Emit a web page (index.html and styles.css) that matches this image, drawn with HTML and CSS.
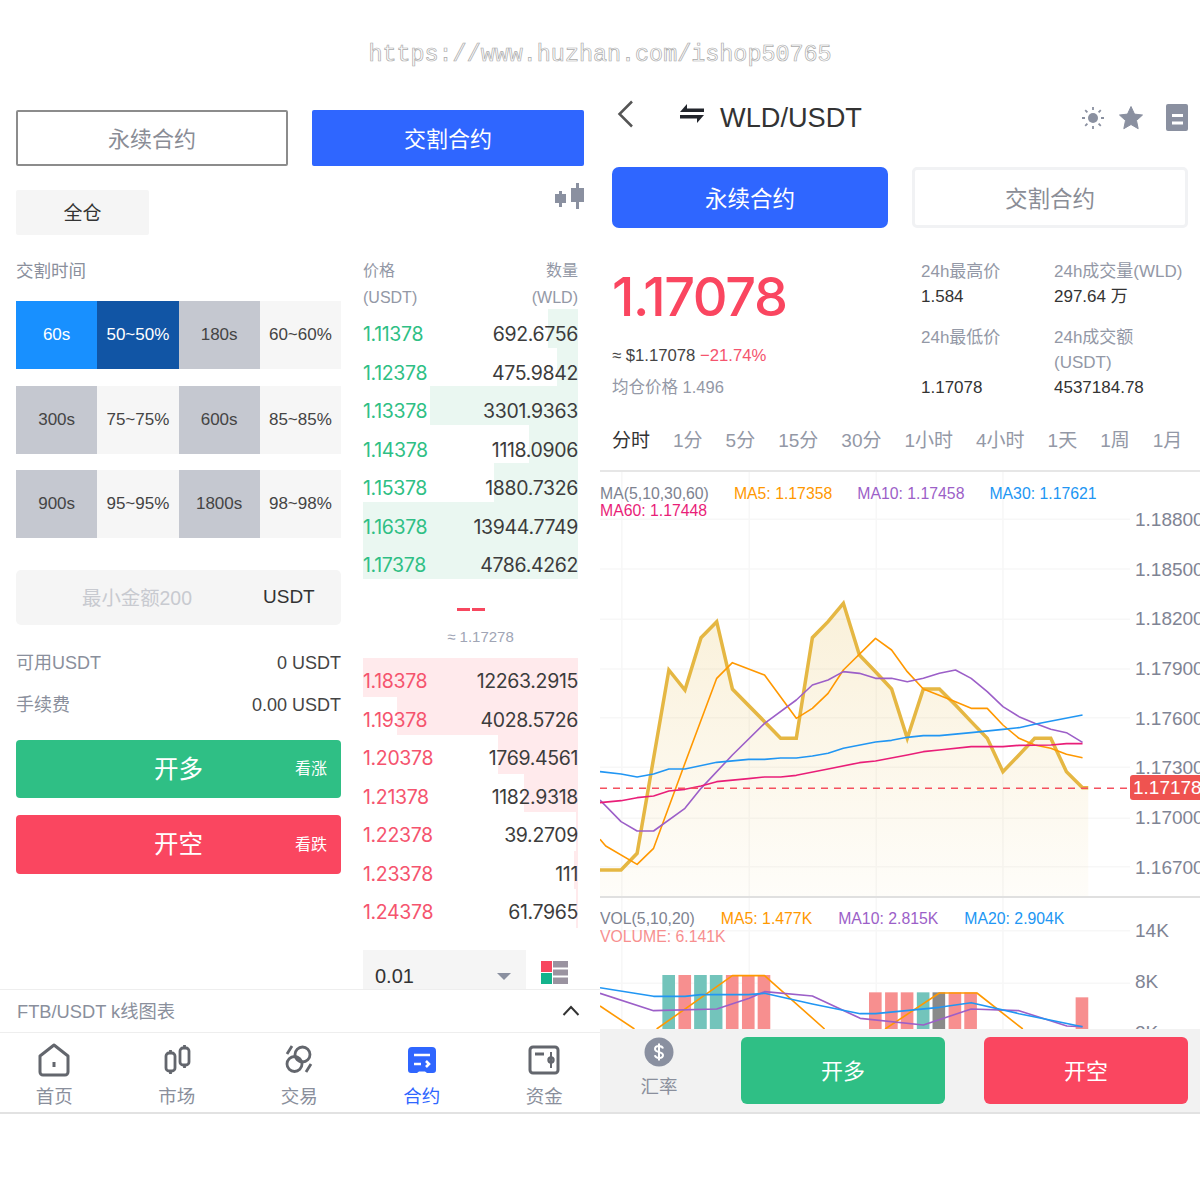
FILE: index.html
```html
<!DOCTYPE html>
<html lang="en">
<head>
    <meta charset="UTF-8">
    <meta name="viewport" content="width=device-width, initial-scale=1.0">
    <title>WLD/USDT</title>
    <link rel="stylesheet" href="styles.css">
</head>
<body>
    <div class="watermark">https://www.huzhan.com/ishop50765</div>

    <div class="screens">
        <!-- delivery contract screen -->
        <section class="screen">
            <div class="main">
                <div class="tabs">
                    <div class="tab tab-outline">永续合约</div>
                    <div class="tab tab-active">交割合约</div>
                </div>

                <div class="mode-row">
                    <div class="chip">全仓</div>
                    <svg class="candle-icon" width="30" height="27" viewBox="0 0 30 27">
                        <path d="M4 8h3v3h4v9H7v4H4v-4H0v-9h4z" fill="#8a90a0"/>
                        <path d="M21 0h3v5h5v14h-5v7h-3v-7h-5V5h5z" fill="#8a90a0"/>
                    </svg>
                </div>

                <div class="trade">
                    <div class="form">
                        <div class="form-label">交割时间</div>
                        <div class="periods">
                            <div class="cell cell-blue">60s</div>
                            <div class="cell cell-navy">50~50%</div>
                            <div class="cell cell-grey">180s</div>
                            <div class="cell">60~60%</div>
                            <div class="cell cell-grey">300s</div>
                            <div class="cell">75~75%</div>
                            <div class="cell cell-grey">600s</div>
                            <div class="cell">85~85%</div>
                            <div class="cell cell-grey">900s</div>
                            <div class="cell">95~95%</div>
                            <div class="cell cell-grey">1800s</div>
                            <div class="cell">98~98%</div>
                        </div>
                        <div class="amount">
                            <span class="amount-hint">最小金额200</span>
                            <span class="amount-unit">USDT</span>
                        </div>
                        <div class="info-row info-first"><span>可用USDT</span><b>0 USDT</b></div>
                        <div class="info-row"><span>手续费</span><b>0.00 USDT</b></div>
                        <div class="big-btn btn-green"><span class="big-text">开多</span><span class="big-note">看涨</span></div>
                        <div class="big-btn btn-red"><span class="big-text">开空</span><span class="big-note">看跌</span></div>
                    </div>

                    <div class="book">
                        <div class="book-head">
                            <div><span>价格</span><span>数量</span></div>
                            <div><span>(USDT)</span><span>(WLD)</span></div>
                        </div>
                        <div class="book-row buy"><i class="depth" style="width:14%"></i><span class="price">1.11378</span><span>692.6756</span></div>
                        <div class="book-row buy"><i class="depth" style="width:10%"></i><span class="price">1.12378</span><span>475.9842</span></div>
                        <div class="book-row buy"><i class="depth" style="width:69%"></i><span class="price">1.13378</span><span>3301.9363</span></div>
                        <div class="book-row buy"><i class="depth" style="width:23%"></i><span class="price">1.14378</span><span>1118.0906</span></div>
                        <div class="book-row buy"><i class="depth" style="width:39%"></i><span class="price">1.15378</span><span>1880.7326</span></div>
                        <div class="book-row buy"><i class="depth" style="width:100%"></i><span class="price">1.16378</span><span>13944.7749</span></div>
                        <div class="book-row buy"><i class="depth" style="width:100%"></i><span class="price">1.17378</span><span>4786.4262</span></div>
                        <div class="book-mid">
                            <div class="dashes"><i></i><i></i></div>
                            <div class="mid-price">≈ 1.17278</div>
                        </div>
                        <div class="book-row sell"><i class="depth" style="width:100%"></i><span class="price">1.18378</span><span>12263.2915</span></div>
                        <div class="book-row sell"><i class="depth" style="width:84%"></i><span class="price">1.19378</span><span>4028.5726</span></div>
                        <div class="book-row sell"><i class="depth" style="width:37%"></i><span class="price">1.20378</span><span>1769.4561</span></div>
                        <div class="book-row sell"><i class="depth" style="width:25%"></i><span class="price">1.21378</span><span>1182.9318</span></div>
                        <div class="book-row sell"><i class="depth" style="width:1%"></i><span class="price">1.22378</span><span>39.2709</span></div>
                        <div class="book-row sell"><i class="depth" style="width:2%"></i><span class="price">1.23378</span><span>111</span></div>
                        <div class="book-row sell"><i class="depth" style="width:1%"></i><span class="price">1.24378</span><span>61.7965</span></div>
                        <div class="book-tools">
                            <div class="select"><span>0.01</span><i class="caret"></i></div>
                            <svg width="27" height="23" viewBox="0 0 27 23">
                                <rect width="11" height="11" fill="#f7475f"/>
                                <rect y="12" width="11" height="11" fill="#14b38c"/>
                                <rect x="12" width="15" height="6.5" fill="#9a93a0"/>
                                <rect x="12" y="8.5" width="15" height="6" fill="#9a93a0"/>
                                <rect x="12" y="16.5" width="15" height="6.5" fill="#9a93a0"/>
                            </svg>
                        </div>
                    </div>
                </div>
            </div>

            <div class="kline-bar">
                <span>FTB/USDT k线图表</span>
                <svg width="18" height="11" viewBox="0 0 18 11"><path d="M1.5 10L9 2l7.5 8" fill="none" stroke="#333" stroke-width="2"/></svg>
            </div>
            <nav class="nav">
                <div class="nav-item">
                    <svg width="34" height="34" viewBox="0 0 34 34" fill="none" stroke="#63666d" stroke-width="3" stroke-linejoin="round">
                        <path d="M3 13L17 2l14 11v16a3 3 0 0 1-3 3H6a3 3 0 0 1-3-3z"/>
                        <path d="M17 19v5"/>
                    </svg>
                    <span>首页</span>
                </div>
                <div class="nav-item">
                    <svg width="34" height="34" viewBox="0 0 34 34" fill="none" stroke="#63666d" stroke-width="2.8">
                        <rect x="6" y="10" width="9" height="18" rx="3"/>
                        <path d="M10.500 7v3M10.500 28v3"/>
                        <rect x="20" y="5" width="9" height="17" rx="3"/>
                        <path d="M24.500 2v3M24.500 22v3"/>
                    </svg>
                    <span>市场</span>
                </div>
                <div class="nav-item">
                    <svg width="34" height="34" viewBox="0 0 34 34" fill="none" stroke="#63666d" stroke-width="2.8">
                        <circle cx="20.500" cy="11.500" r="7.500"/>
                        <circle cx="12.500" cy="21" r="7.500"/>
                        <path d="M5 11L10 3M29 21l-5 8"/>
                    </svg>
                    <span>交易</span>
                </div>
                <div class="nav-item nav-active">
                    <svg width="34" height="34" viewBox="0 0 34 34">
                        <path d="M7 4h20a4 4 0 0 1 4 4v19a3 3 0 0 1-3 3h-6l-2-1.500h-6L12 30H6a3 3 0 0 1-3-3V8a4 4 0 0 1 4-4z" fill="#2f66ff"/>
                        <path d="M9 12h16M9 21h7M21 18l3 3-3 3" fill="none" stroke="#fff" stroke-width="2.600"/>
                    </svg>
                    <span>合约</span>
                </div>
                <div class="nav-item">
                    <svg width="34" height="34" viewBox="0 0 34 34" fill="none" stroke="#63666d" stroke-width="3">
                        <rect x="3" y="4" width="28" height="26" rx="3"/>
                        <path d="M8 11h9" />
                        <path d="M24 9v16" stroke-width="2"/>
                        <circle cx="24" cy="17" r="2.500" stroke-width="2.400"/>
                    </svg>
                    <span>资金</span>
                </div>
            </nav>
        </section>

        <!-- perpetual contract screen -->
        <section class="screen">
            <header class="pair-head">
                <svg class="back-icon" width="17" height="28" viewBox="0 0 17 28"><path d="M15 1.500L2.500 14 15 26.500" fill="none" stroke="#555" stroke-width="2.500"/></svg>
                <svg class="swap-icon" width="24" height="19" viewBox="0 0 24 19"><path d="M7 0v4.500h17V8H0z" fill="#22252c"/><path d="M17 19v-4.500H0V11h24z" fill="#22252c"/></svg>
                <h1 class="pair">WLD/USDT</h1>
                <div class="head-icons">
                    <svg class="sun-icon" width="22" height="22" viewBox="0 0 22 22">
                        <circle cx="11" cy="11" r="5" fill="#8a90a0"/>
                        <path d="M11 0v3M11 19v3M0 11h3M19 11h3M3.200 3.200l2.200 2.200M16.600 16.600l2.200 2.200M3.200 18.800l2.200-2.200M16.600 5.400l2.200-2.200" stroke="#8a90a0" stroke-width="1.800"/>
                    </svg>
                    <svg class="star-icon" width="24" height="24" viewBox="0 0 24 24"><path d="M12 .5l3.500 7.600 8 .9-6 5.500 1.700 8.200L12 18.500l-7.200 4.200 1.700-8.200-6-5.500 8-.9z" fill="#8a90a0" stroke="#8a90a0" stroke-linejoin="round"/></svg>
                    <svg width="22" height="27" viewBox="0 0 22 27"><rect width="22" height="27" rx="2" fill="#8a90a0"/><path d="M6 11.500h11M6 19h11" stroke="#fff" stroke-width="3.200"/></svg>
                </div>
            </header>

            <div class="tabs tabs-big">
                <div class="tab tab-active">永续合约</div>
                <div class="tab tab-soft">交割合约</div>
            </div>

            <div class="quote">
                <div class="quote-left">
                    <div class="last-price">1.17078</div>
                    <div class="approx">≈ $1.17078 <em>−21.74%</em></div>
                    <div class="avg">均仓价格 1.496</div>
                </div>
                <div class="stat-col stat-low">
                    <div><label>24h最高价</label><b>1.584</b></div>
                    <div><label>24h最低价</label><b>1.17078</b></div>
                </div>
                <div class="stat-col">
                    <div><label>24h成交量(WLD)</label><b>297.64 万</b></div>
                    <div><label>24h成交额<br>(USDT)</label><b>4537184.78</b></div>
                </div>
            </div>

            <div class="periods-bar">
                <span class="on">分时</span><span>1分</span><span>5分</span><span>15分</span><span>30分</span><span>1小时</span><span>4小时</span><span>1天</span><span>1周</span><span>1月</span>
            </div>

            <div class="kchart">
                <svg class="plot plot-main" viewBox="0 0 1568 1320" preserveAspectRatio="none">
                    <defs>
                        <linearGradient id="goldFill" x1="0" y1="0" x2="0" y2="1">
                            <stop offset="0" stop-color="#e5b743" stop-opacity="0.2"/>
                            <stop offset="1" stop-color="#e5b743" stop-opacity="0.03"/>
                        </linearGradient>
                    </defs>
                    <path class="grid" d="M0 148H1385M0 297H1385M0 448H1385M0 597H1385M0 743H1385M0 892H1385M0 1045H1385M0 1190H1385M57 6V1285M390 6V1285M722 6V1285M1053 6V1285"/>
                    <polygon fill="url(#goldFill)" points="0,1200 55,1200 97,1150 180,600 222,660 264,503 305,455 346,657 430,755 472,805 513,805 555,503 596,455 636,400 678,555 720,605 762,657 803,805 845,657 887,657 929,705 970,755 1012,805 1053,905 1095,855 1136,805 1178,805 1219,905 1261,953 1276,953 1276,1285 0,1285"/>
                    <polyline class="line gold" points="0,1200 55,1200 97,1150 180,600 222,660 264,503 305,455 346,657 430,755 472,805 513,805 555,503 596,455 636,400 678,555 720,605 762,657 803,805 845,657 887,657 929,705 970,755 1012,805 1053,905 1095,855 1136,805 1178,805 1219,905 1261,953 1276,953"/>
                    <polyline class="line orange" points="0,1108 15,1128 97,1183 140,1135 222,880 305,625 346,578 430,615 513,745 555,715 596,670 636,600 720,505 762,540 803,605 845,657 929,695 970,715 1012,715 1053,765 1095,805 1136,825 1178,835 1219,853 1261,863"/>
                    <polyline class="line purple" points="0,990 55,1055 97,1083 140,1083 222,1015 264,955 346,855 430,760 513,690 555,645 596,630 636,605 678,610 720,625 762,625 803,635 845,625 887,610 929,600 970,625 1012,665 1053,710 1095,740 1136,760 1178,778 1219,788 1261,817"/>
                    <polyline class="line blue" points="0,905 55,912 97,921 140,912 180,897 222,897 305,877 388,868 430,868 472,864 513,864 555,858 596,850 636,835 720,816 762,811 803,802 845,797 887,797 970,788 1053,778 1095,773 1136,763 1261,735"/>
                    <polyline class="line pink" points="0,998 55,992 97,983 140,978 180,963 222,958 264,948 305,935 388,926 430,921 472,921 513,916 596,897 678,878 720,873 803,855 845,845 887,840 970,830 1053,830 1095,826 1178,825 1219,821 1261,821"/>
                    <path class="last-line" d="M0 955H1385"/>
                </svg>
                <div class="legend">
                    <span class="grey">MA(5,10,30,60)</span>
                    <span class="c-orange">MA5: 1.17358</span>
                    <span class="c-purple">MA10: 1.17458</span>
                    <span class="c-blue">MA30: 1.17621</span>
                    <span class="c-pink">MA60: 1.17448</span>
                </div>
                <div class="axis">
                    <span>1.18800</span><span>1.18500</span><span>1.18200</span><span>1.17900</span><span>1.17600</span><span>1.17300</span><span>1.17000</span><span>1.16700</span>
                </div>
                <div class="last-tag">1.17178</div>
            </div>

            <div class="vchart">
                <svg class="plot plot-vol" viewBox="0 0 1568 720" preserveAspectRatio="none">
                    <path class="grid" d="M0 122H1385M0 280H1385M57 0V420M390 0V420M722 0V420M1053 0V420"/>
                    <g class="bar-teal"><rect x="163" y="255" width="33" height="165"/><rect x="246" y="255" width="33" height="165"/><rect x="287" y="255" width="33" height="165"/><rect x="828" y="307" width="33" height="113"/></g>
                    <g class="bar-red">
                        <rect x="205" y="255" width="33" height="165"/><rect x="329" y="255" width="33" height="165"/><rect x="371" y="255" width="33" height="165"/><rect x="412" y="255" width="33" height="165"/>
                        <rect x="703" y="307" width="33" height="113"/><rect x="745" y="307" width="33" height="113"/><rect x="786" y="307" width="33" height="113"/><rect x="911" y="307" width="33" height="113"/><rect x="952" y="307" width="33" height="113"/><rect x="1243" y="322" width="33" height="98"/>
                    </g>
                    <rect x="869" y="307" width="33" height="113" fill="#8a8a8a"/>
                    <polyline class="line orange" points="0,348 90,417"/>
                    <polyline class="line orange" points="148,417 346,257 430,257 587,417"/>
                    <polyline class="line orange" points="745,417 887,309 985,309 1105,417"/>
                    <polyline class="line purple" points="0,310 140,362 305,357 390,325 430,305 555,318 680,385 845,405 970,357 1095,362 1220,408 1261,410"/>
                    <polyline class="line blue" points="0,293 140,319 222,319 264,314 388,314 430,310 555,342 680,371 720,371 887,352 970,338 1095,371 1261,410"/>
                </svg>
                <div class="legend legend-vol">
                    <span class="grey">VOL(5,10,20)</span>
                    <span class="c-orange">MA5: 1.477K</span>
                    <span class="c-purple">MA10: 2.815K</span>
                    <span class="c-blue">MA20: 2.904K</span>
                    <span class="c-salmon">VOLUME: 6.141K</span>
                </div>
                <div class="axis axis-vol"><span>14K</span><span>8K</span><span>2K</span></div>
            </div>

            <footer class="actions">
                <div class="rate">
                    <svg width="30" height="30" viewBox="0 0 30 30">
                        <circle cx="15" cy="15" r="14.500" fill="#8a90a0"/>
                        <path d="M19 11.500c-.6-1.800-2-2.500-4-2.500-2.300 0-4 1.100-4 3 0 4 8 2.200 8 6 0 1.900-1.700 3-4 3-2.200 0-3.600-.9-4.200-2.700M15 6.500v17" fill="none" stroke="#fff" stroke-width="2"/>
                    </svg>
                    <span>汇率</span>
                </div>
                <div class="act-btn btn-green">开多</div>
                <div class="act-btn btn-red">开空</div>
            </footer>
        </section>
    </div>
</body>
</html>
```

FILE: styles.css
```css
* {
    box-sizing: border-box;
}
html, body {
    margin: 0;
    padding: 0;
}
body {
    width: 1200px;
    height: 1200px;
    overflow: hidden;
    background: white;
    color: #333;
    font-family: "Liberation Sans", "Noto Sans CJK SC", sans-serif;
}
.watermark {
    height: 95px;
    padding-top: 40px;
    text-align: center;
    font-family: "Liberation Mono", monospace;
    font-size: 23.4px;
    line-height: 30px;
    color: white;
    -webkit-text-stroke: 0.7px #aaa;
}
.screens {
    display: flex;
}
.screen {
    position: relative;
    width: 600px;
    height: 1019px;
    display: flex;
    flex-direction: column;
    overflow: hidden;
    border-bottom: 2px solid #e2e2e2;
}

/* tabs */
.tabs {
    display: flex;
    gap: 24px;
    margin: 15px 16px 0;
}
.tab {
    width: 272px;
    height: 56px;
    padding-bottom: 2px;
    display: flex;
    align-items: center;
    justify-content: center;
    border-radius: 2px;
    font-size: 22px;
}
.tab-active {
    background: #2f66ff;
    color: white;
}
.tab-outline {
    border: 2px solid #8c8c8c;
    color: #8a8d96;
}
.tab-soft {
    border: 3px solid #f1f2f4;
    border-radius: 5px;
    color: #8a8d96;
}
.tabs-big {
    margin: 0 12px;
}
.tabs-big .tab {
    width: 276px;
    height: 61px;
    font-size: 22.5px;
}
.tabs-big .tab-active {
    border-radius: 7px;
}

/* left screen */
.main {
    height: 894px;
    overflow: hidden;
}
.mode-row {
    display: flex;
    justify-content: space-between;
    align-items: flex-start;
    margin: 24px 15px 0 16px;
}
.chip {
    width: 133px;
    height: 45px;
    padding-bottom: 2px;
    background: #f5f5f5;
    border-radius: 2px;
    display: flex;
    align-items: center;
    justify-content: center;
    font-size: 19px;
}
.candle-icon {
    margin-top: -7px;
}
.trade {
    display: flex;
    gap: 22px;
    margin-top: 23px;
    padding-left: 16px;
}
.form {
    width: 325px;
}
.form-label {
    height: 26px;
    margin-bottom: 17px;
    font-size: 17.5px;
    line-height: 26px;
    color: #8a8f9c;
}
.periods {
    display: grid;
    grid-template-columns: repeat(4, 1fr);
    grid-auto-rows: 68px;
    row-gap: 16.5px;
}
.cell {
    display: flex;
    align-items: center;
    justify-content: center;
    background: #f6f6f6;
    font-size: 17px;
    color: #444;
}
.cell-blue {
    background: #1890ff;
    color: white;
}
.cell-navy {
    background: #1155a5;
    color: white;
}
.cell-grey {
    background: #c5c8d0;
}
.amount {
    display: flex;
    align-items: center;
    height: 55px;
    margin-top: 32px;
    padding-left: 66px;
    padding-bottom: 2px;
    background: #f5f5f5;
    border-radius: 5px;
}
.amount-hint {
    width: 181px;
    font-size: 19.4px;
    color: #c8cad0;
}
.amount-unit {
    font-size: 19px;
    color: #333;
}
.info-row {
    display: flex;
    justify-content: space-between;
    height: 41.5px;
    font-size: 18px;
    line-height: 41px;
    color: #8a8f9c;
}
.info-row b {
    font-weight: normal;
    color: #444;
}
.info-first {
    margin-top: 18px;
}
.big-btn {
    position: relative;
    height: 58px;
    margin-top: 14px;
    padding-bottom: 4px;
    border-radius: 4px;
    color: white;
    display: flex;
    align-items: center;
    justify-content: center;
}
.btn-red.big-btn {
    margin-top: 17px;
    height: 59px;
}
.btn-green {
    background: #2fbf85;
}
.btn-red {
    background: #fa4660;
}
.big-text {
    font-size: 24.5px;
}
.big-note {
    position: absolute;
    right: 14px;
    font-size: 16px;
}

/* order book */
.book {
    width: 215px;
    margin-top: -1px;
}
.book-head {
    height: 52px;
    font-size: 16px;
    line-height: 27px;
    color: #9398a6;
}
.book-head div {
    display: flex;
    justify-content: space-between;
}
.book-row {
    position: relative;
    display: flex;
    justify-content: space-between;
    height: 38.5px;
    padding-top: 12px;
    font-family: Inter, "Liberation Sans", sans-serif;
    font-size: 19.5px;
    letter-spacing: -0.35px;
    line-height: 26px;
    color: #3c3c3c;
}
.book-row span {
    position: relative;
}
.depth {
    position: absolute;
    top: 0;
    right: 0;
    bottom: 0;
}
.buy .depth {
    background: #eaf7f1;
}
.buy .price {
    color: #2fbf85;
}
.sell {
    padding-top: 10px;
}
.sell .depth {
    background: #ffeaec;
}
.sell .price {
    color: #f5546e;
}
.book-mid {
    height: 79.5px;
    padding-top: 29px;
    text-align: center;
}
.dashes {
    display: flex;
    justify-content: center;
    gap: 2px;
    height: 3px;
}
.dashes i {
    width: 13px;
    background: #f7475f;
}
.mid-price {
    margin-top: 16px;
    padding-left: 20px;
    font-size: 15px;
    line-height: 20px;
    color: #a0a5b5;
}
.book-tools {
    display: flex;
    align-items: flex-start;
    gap: 15px;
    margin-top: 22px;
}
.book-tools svg {
    margin-top: 11px;
}
.select {
    display: flex;
    align-items: center;
    justify-content: space-between;
    width: 163px;
    height: 54px;
    padding: 0 15px 0 12px;
    background: #f5f5f5;
    font-size: 20px;
}
.caret {
    width: 0;
    height: 0;
    border-left: 7px solid transparent;
    border-right: 7px solid transparent;
    border-top: 7px solid #8a90a0;
}
.kline-bar {
    display: flex;
    align-items: center;
    justify-content: space-between;
    height: 44px;
    padding: 0 20px 2px 17px;
    border-top: 1px solid #eee;
    border-bottom: 1px solid #eee;
    font-size: 18.3px;
    color: #8a8f9c;
}
.nav {
    display: grid;
    grid-template-columns: repeat(5, 122.5px);
    margin-left: -7px;
}
.nav-item {
    display: flex;
    flex-direction: column;
    align-items: center;
    padding-top: 10px;
    font-size: 18.5px;
    line-height: 26px;
    color: #8a8f9c;
}
.nav-item span {
    margin-top: 7px;
}
.nav-active {
    color: #2f66ff;
}

/* right screen */
.pair-head {
    display: flex;
    align-items: flex-start;
    flex: none;
    height: 72px;
    padding-left: 17px;
    padding-right: 12px;
}
.back-icon {
    margin-top: 5px;
}
.swap-icon {
    margin-left: 46px;
    margin-top: 9px;
}
.pair {
    margin: 7px 0 0 16px;
    font-size: 27.2px;
    font-weight: normal;
    line-height: 32px;
    color: #333;
}
.head-icons {
    display: flex;
    align-items: flex-start;
    margin-left: auto;
    margin-top: 9px;
}
.sun-icon {
    margin-top: 3px;
    margin-right: 15px;
}
.star-icon {
    margin-top: 2px;
    margin-right: 23px;
}
.quote {
    display: flex;
    flex: none;
    height: 171px;
    margin-top: 31px;
    padding-left: 12px;
    line-height: 25px;
}
.quote-left {
    width: 309px;
}
.last-price {
    height: 76px;
    font-family: Inter, "Liberation Sans", sans-serif;
    font-size: 54px;
    font-weight: 500;
    line-height: 76px;
    letter-spacing: -1.4px;
    color: #fa4660;
}
.approx {
    margin-top: 7.5px;
    font-size: 16.7px;
    color: #444;
}
.approx em {
    font-style: normal;
    color: #f5546e;
}
.avg {
    margin-top: 7px;
    font-size: 16.5px;
    color: #9398a6;
}
.stat-col {
    width: 133px;
    display: flex;
    flex-direction: column;
    gap: 16px;
    height: 142px;
    font-size: 17px;
}
.stat-col label {
    display: block;
    color: #9398a6;
}
.stat-col b {
    display: block;
    font-weight: normal;
    font-size: 17px;
    color: #333;
}
.stat-low div:last-child label {
    margin-bottom: 25px;
}
.periods-bar {
    display: flex;
    flex: none;
    gap: 23px;
    height: 72px;
    margin-top: -30px;
    padding: 28px 0 16px 12px;
    border-bottom: 2px solid #e6e6e6;
    font-size: 19px;
    line-height: 26px;
    color: #9398a6;
    white-space: nowrap;
}
.periods-bar .on {
    color: #333;
}

/* charts */
.kchart, .vchart {
    position: relative;
    flex: none;
    overflow: hidden;
}
.kchart {
    height: 426px;
    border-bottom: 2px solid #e0e0e0;
}
.vchart {
    height: 131px;
}
.plot {
    position: absolute;
    left: 0;
    width: 600px;
}
.plot-main {
    top: -2px;
    height: 440px;
}
.plot-vol {
    top: -8px;
    height: 240px;
}
.plot * {
    vector-effect: non-scaling-stroke;
}
.grid {
    fill: none;
    stroke: #f7f7f7;
    stroke-width: 1.5;
}
.line {
    fill: none;
    stroke-width: 1.6;
    stroke-linejoin: round;
}
.gold {
    stroke: #e5b743;
    stroke-width: 3.5;
    stroke-linejoin: miter;
}
.orange {
    stroke: #ff9800;
}
.purple {
    stroke: #9c5fc8;
}
.blue {
    stroke: #2196f3;
}
.pink {
    stroke: #e91e78;
}
.last-line {
    fill: none;
    stroke: #f4505f;
    stroke-width: 1.5;
    stroke-dasharray: 7 6;
}
.bar-teal {
    fill: #73c4bb;
}
.bar-red {
    fill: #f78f8f;
}
.legend {
    position: relative;
    display: flex;
    flex-wrap: wrap;
    gap: 0 25px;
    width: 510px;
    padding-top: 13px;
    font-size: 15.8px;
    line-height: 17px;
}
.legend-vol {
    gap: 0 26px;
    padding-top: 12px;
    line-height: 18px;
}
.grey {
    color: #7d8290;
}
.c-orange {
    color: #ff9800;
}
.c-purple {
    color: #9c5fc8;
}
.c-blue {
    color: #2196f3;
}
.c-pink {
    color: #e91e78;
}
.c-salmon {
    color: #f78f8f;
}
.axis {
    position: absolute;
    top: 34px;
    left: 535px;
    display: flex;
    flex-direction: column;
    gap: 21.7px;
    font-size: 19px;
    line-height: 28px;
    color: #7f8494;
}
.axis-vol {
    top: 20px;
    gap: 25px;
    line-height: 26px;
}
.last-tag {
    position: absolute;
    top: 303px;
    left: 530px;
    width: 74px;
    height: 25px;
    padding-left: 3px;
    background: #ef5350;
    border-radius: 3px;
    color: white;
    font-size: 19px;
    line-height: 25px;
}
.actions {
    display: flex;
    flex: none;
    align-items: flex-start;
    height: 83px;
    padding-top: 8px;
    background: #f2f2f2;
}
.rate {
    width: 118px;
    display: flex;
    flex-direction: column;
    align-items: center;
    font-size: 18.5px;
    color: #8a8f9c;
}
.rate span {
    margin-top: 5px;
}
.act-btn {
    width: 204px;
    height: 67px;
    margin-left: 23px;
    padding-bottom: 4px;
    border-radius: 6px;
    color: white;
    font-size: 22px;
    display: flex;
    align-items: center;
    justify-content: center;
}
.act-btn + .act-btn {
    margin-left: 39px;
}
```
